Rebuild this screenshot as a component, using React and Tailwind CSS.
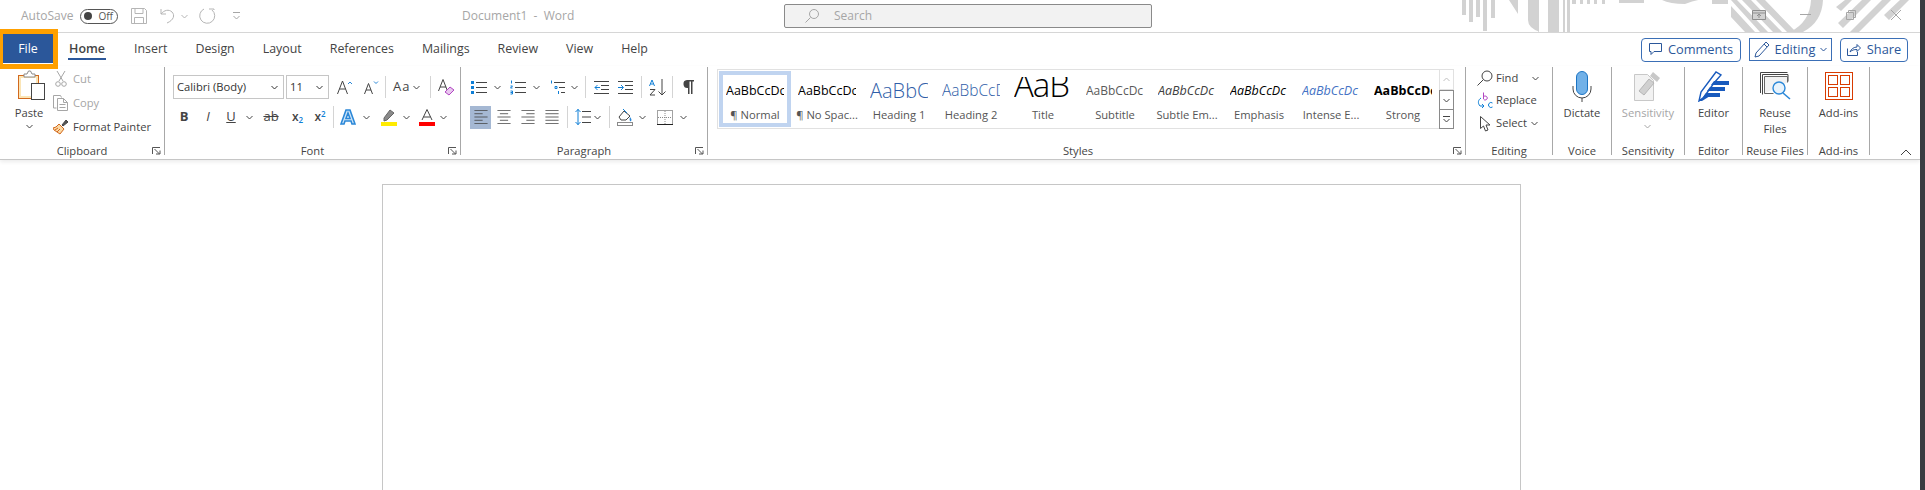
import { Fragment } from "react";

const tabs = ["Insert", "Design", "Layout", "References", "Mailings", "Review", "View", "Help"];

const styleTiles = [
  { sample: "AaBbCcDc", label: "¶ Normal", cls: "text-[12.5px] text-black", selected: true },
  { sample: "AaBbCcDc", label: "¶ No Spac...", cls: "text-[12.5px] text-black" },
  { sample: "AaBbCc", label: "Heading 1", cls: "text-[20px] text-[#2f5ea8] font-light" },
  { sample: "AaBbCcD", label: "Heading 2", cls: "text-[15.5px] text-[#2f5ea8] font-light" },
  { sample: "AaB", label: "Title", cls: "text-[33px] text-black font-light tracking-[-1px] pb-[12px]" },
  { sample: "AaBbCcDc", label: "Subtitle", cls: "text-[12px] text-[#5a5a5a]" },
  { sample: "AaBbCcDc", label: "Subtle Em...", cls: "text-[12.5px] text-[#404040] italic" },
  { sample: "AaBbCcDc", label: "Emphasis", cls: "text-[12.5px] text-black italic" },
  { sample: "AaBbCcDc", label: "Intense E...", cls: "text-[12.5px] text-[#4472c4] italic" },
  { sample: "AaBbCcDc", label: "Strong", cls: "text-[12.5px] text-black font-bold" },
];

function Chev({ color = "#444" }) {
  return (
    <svg width="7" height="5" viewBox="0 0 7 5" fill="none">
      <path d="M.5 1l3 3 3-3" stroke={color} strokeWidth="1" />
    </svg>
  );
}

function Launcher() {
  return (
    <svg width="9" height="8" viewBox="0 0 9 8" fill="none" stroke="#555" className="absolute right-[3px] bottom-0">
      <path d="M.5 7V.5H8M2.5 2l5 5M4 7h4V3.5" />
    </svg>
  );
}

function Sep({ className = "" }) {
  return <div className={"w-px h-[22px] bg-[#d4d4d4] " + className} />;
}

function Cell({ w, children }) {
  return <div className={"flex items-center justify-center h-[23px] shrink-0 " + w}>{children}</div>;
}

function Group({ w, label, launcher, children }) {
  return (
    <div className={"relative flex flex-col h-[88px] border-r border-[#a8a8a8] shrink-0 " + w}>
      <div className="flex-1 min-h-0">{children}</div>
      <div className="text-center text-[11.2px] leading-[14px] h-[14px] -mb-[3px] text-[#444] whitespace-nowrap">{label}</div>
      {launcher && <Launcher />}
    </div>
  );
}

function Big({ icon, children, muted }) {
  return (
    <div className={"flex flex-col items-center pt-[3px] text-[11.2px] leading-[16px] " + (muted ? "text-[#a6a6a6]" : "text-[#444]")}>
      <div className="h-[32px] flex items-center justify-center">{icon}</div>
      <div className="mt-[3px] text-center">{children}</div>
    </div>
  );
}

const PasteIcon = () => (
  <svg width="28" height="31" viewBox="0 0 28 31" fill="none">
    <rect x=".5" y="5.5" width="20" height="23" fill="#fbe5b6" stroke="#d2691e" />
    <rect x="3" y="8" width="15" height="18" fill="#fff" />
    <path d="M6 7V4h3l1.5-3 2 0L14 4h3v3z" fill="#fff" stroke="#8a8a8a" />
    <rect x="13.5" y="13.5" width="13" height="16" fill="#fff" stroke="#444" />
  </svg>
);

const CutIcon = () => (
  <svg width="12" height="16" viewBox="0 0 12 16" fill="none" stroke="#a6a6a6">
    <path d="M2 0l6 10M10 0L4 10" />
    <circle cx="3" cy="13" r="2.3" />
    <circle cx="9" cy="13" r="2.3" />
  </svg>
);

const CopyIcon = () => (
  <svg width="16" height="16" viewBox="0 0 16 16" fill="none" stroke="#a6a6a6">
    <path d="M.5 13V.5h7l1 2M.5 13h3" />
    <path d="M4.5 3.5h6l4 4v8h-10zM10.5 3.5v4h4M6.5 9.500h6M6.5 12.5h6" />
  </svg>
);

const BrushIcon = () => (
  <svg width="16" height="16" viewBox="0 0 16 16" fill="none">
    <path d="M6 5l5 5-4 5-6-4-1-2 3-1z" fill="#fbd9a5" stroke="#d2691e" />
    <path d="M2 11l3-2M4 13l3-3" stroke="#d2691e" />
    <path d="M9 6l4-5 2 2-5 4z" fill="#555" stroke="#444" />
  </svg>
);

const Grow = ({ up }) => (
  <svg width="16" height="15" viewBox="0 0 16 15" fill="none" strokeWidth="1">
    <path d={up ? "M.5 14L5.5 1l5 13M2.5 9h6" : "M1.5 14L5.5 3.5l4 10.5M3 10h5"} stroke="#444" />
    <path d={up ? "M11 4l2-2 2 2" : "M11 1.5l2 2 2-2"} stroke="#2b88d8" />
  </svg>
);

const ClearIcon = () => (
  <svg width="17" height="17" viewBox="0 0 17 17" fill="none">
    <path d="M.5 12L5 .5 9.5 12M2 8h6" stroke="#444" />
    <path d="M7 13l5-5 4 3-5 5z" fill="#e8c8ee" stroke="#b146c2" />
  </svg>
);

const TextA = () => (
  <svg width="16" height="16" viewBox="0 0 16 16" fill="#cfe4f7" stroke="#2b88d8" strokeWidth="1.6">
    <path fillRule="evenodd" d="M1 15L6 1h4l5 14h-3l-1-3H5l-1 3zM6 9.5h4L8 4z" />
  </svg>
);

const HighlightIcon = () => (
  <svg width="16" height="17" viewBox="0 0 16 17" fill="none">
    <path d="M3 9l6-8 4 3-7 7-3 1z" fill="#8a8a8a" stroke="#666" />
    <rect y="13" width="16" height="4" fill="#ffeb00" />
  </svg>
);

const FontColorIcon = () => (
  <svg width="16" height="17" viewBox="0 0 16 17" fill="none">
    <path d="M3 11L8 .5 13 11M4.5 8h7" stroke="#444" />
    <rect y="13" width="16" height="4" fill="#f00" />
  </svg>
);

const Bullets = () => (
  <svg width="16" height="15" viewBox="0 0 16 15" fill="none">
    <rect width="3" height="3" y="1" fill="#0f7fd6" />
    <rect width="3" height="3" y="6" fill="#0f7fd6" />
    <rect width="3" height="3" y="11" fill="#0f7fd6" />
    <path d="M5 2.5h11M5 7.5h11M5 12.5h11" stroke="#444" />
  </svg>
);

const Numbered = () => (
  <svg width="16" height="15" viewBox="0 0 16 15" fill="none">
    <path d="M1.5 .5v3M.5 6h2l-2 2h2M.5 11h2v3h-2M.5 12.5h2" stroke="#0f7fd6" />
    <path d="M5 2.5h11M5 7.5h11M5 12.5h11" stroke="#444" />
  </svg>
);

const Multi = () => (
  <svg width="16" height="15" viewBox="0 0 16 15" fill="none">
    <path d="M1.5 .5v3M5 6.5h2v2H5zM8.5 11v3" stroke="#0f7fd6" />
    <path d="M4 2.5h11M9 7.5h6M11 12.5h4" stroke="#444" />
  </svg>
);

const Indent = ({ inc }) => (
  <svg width="15" height="13" viewBox="0 0 15 13" fill="none">
    <path d="M0 .5h15M7 4.5h8M7 8.5h8M0 12.5h15" stroke="#444" />
    <path d={inc ? "M0 6.5h5M3 4l2.5 2.5L3 9" : "M1 6.5h5M3.5 4L1 6.5 3.5 9"} stroke="#0f7fd6" />
  </svg>
);

const SortIcon = () => (
  <svg width="18" height="17" viewBox="0 0 18 17" fill="none">
    <path d="M.5 7L3 1l2.5 6M1.5 5h3" stroke="#0f7fd6" />
    <path d="M1 10.5h5l-5 5.5h5" stroke="#444" />
    <path d="M13 0v16M9.5 12.5L13 16l3.5-3.5" stroke="#444" />
  </svg>
);

const Pilcrow = () => (
  <svg width="11" height="14" viewBox="0 0 11 14">
    <path d="M4 0h7v1.5H9.5V14H8V1.5H6.5V14H5V8a4 4 0 0 1-1-8z" fill="#444" />
  </svg>
);

const Align = ({ kind }) => {
  const short = { left: "M0 4.5h10M0 12.5h10", center: "M3 4.5h10M3 12.5h10", right: "M6 4.5h10M6 12.5h10", justify: "M0 4.5h16M0 12.5h16" }[kind];
  return (
    <svg width="16" height="14" viewBox="0 0 16 17" fill="none" stroke="#444">
      <path d={"M0 .5h16M0 8.5h16M0 16.5h16 " + short} />
    </svg>
  );
};

const LineSpacing = () => (
  <svg width="16" height="16" viewBox="0 0 16 16" fill="none">
    <path d="M3 0v16M.5 3L3 .5 5.5 3M.5 13L3 15.5 5.5 13" stroke="#0f7fd6" />
    <path d="M7 2.5h9M7 8h9M7 13.5h9" stroke="#444" />
  </svg>
);

const Shading = () => (
  <svg width="16" height="17" viewBox="0 0 16 17" fill="none">
    <path d="M2 8l5-6 6 5-4 4H4z" stroke="#444" fill="#fff" />
    <path d="M6 0l4 4" stroke="#0f7fd6" />
    <path d="M13 8c1.5 2 2 3 1 4s-2-1-1-4z" fill="#2b88d8" />
    <rect x=".5" y="13.5" width="15" height="3" fill="#fff" stroke="#8a8a8a" />
  </svg>
);

const Borders = () => (
  <svg width="16" height="15" viewBox="0 0 16 15" fill="none">
    <path d="M.5 .5h15v14H.5z" stroke="#444" strokeDasharray="1 1" />
    <path d="M8 1v13M1 7.5h14" stroke="#8a8a8a" strokeDasharray="1 1" />
    <path d="M0 14.5h16" stroke="#222" />
  </svg>
);

const FindIcon = () => (
  <svg width="16" height="16" viewBox="0 0 16 16" fill="none" stroke="#444">
    <circle cx="10" cy="6" r="5" />
    <path d="M6.5 9.5L.5 15.5" />
  </svg>
);

const ReplaceIcon = () => (
  <svg width="16" height="17" viewBox="0 0 16 17" fill="none" stroke="#0f7fd6">
    <path d="M4 6C1 8 .5 11 3 14h4M5 12l2 2-2 2" />
    <path d="M6.5 .5v6.5a2 2 0 1 0 0-2" stroke="#b146c2" />
    <path d="M15.5 11a2.5 2.5 0 1 0 0 4" />
  </svg>
);

const SelectIcon = () => (
  <svg width="13" height="16" viewBox="0 0 13 16" fill="#fff" stroke="#444">
    <path d="M1.5 .5v12l3-2.5 2 5 2.5-1-2-5h4z" />
  </svg>
);

const MicIcon = () => (
  <svg width="20" height="31" viewBox="0 0 20 31" fill="none">
    <rect x="4.5" y=".5" width="11" height="23" rx="5.5" fill="#71b1e8" stroke="#1d75c4" />
    <path d="M1 15v3a9 9 0 0 0 18 0v-3M10 27v4" stroke="#444" />
  </svg>
);

const SensitivityIcon = () => (
  <svg width="28" height="30" viewBox="0 0 28 30" fill="none">
    <path d="M.5 3.5h13l6 6v20H.5z" fill="#f2f2f2" stroke="#c8c8c8" />
    <path d="M5 20L15 8l5 4-10 12z" fill="#d0d0d0" stroke="#b5b5b5" />
    <path d="M19 1l7 6-3 4-7-6z" fill="#c8c8c8" />
  </svg>
);

const EditorIcon = () => (
  <svg width="32" height="31" viewBox="0 0 32 31" fill="none">
    <path d="M1 30l2-9L18 1l5 3-7 8-10 14z" fill="#fff" stroke="#185abd" strokeWidth="1.4" />
    <path d="M16 10h15v4H13zM12 16h15v4H9zM8 22h14v4H5z" fill="#185abd" />
    <path d="M1 30l5-4 6-1-8 5z" fill="#185abd" />
  </svg>
);

const ReuseIcon = () => (
  <svg width="31" height="28" viewBox="0 0 31 28" fill="none">
    <path d="M.5 21V.5h27" stroke="#444" />
    <path d="M2.5 22.5V2.5h25.5v7" stroke="#444" />
    <path d="M4.5 21.5V4.5h23v6M4.5 21.5h9" stroke="#666" fill="#f2f2f2" />
    <circle cx="19" cy="16" r="6" fill="#e8f3fc" stroke="#2b88d8" strokeWidth="1.4" />
    <path d="M23 21l7 6" stroke="#2b88d8" strokeWidth="1.6" />
  </svg>
);

const AddinsIcon = () => (
  <svg width="28" height="28" viewBox="0 0 28 28" fill="none" stroke="#d83b01">
    <rect x=".5" y=".5" width="27" height="27" />
    <rect x="3.5" y="3.5" width="9" height="9" />
    <rect x="15.5" y="3.5" width="9" height="9" />
    <rect x="3.5" y="15.5" width="9" height="9" />
    <rect x="15.5" y="15.5" width="9" height="9" />
  </svg>
);

function TitleBar() {
  return (
    <div className="relative flex items-center h-[33px] border-b border-[#d6d6d6] overflow-hidden shrink-0">
      {/* grey wallpaper behind the title bar */}
      <svg className="absolute left-[1450px] top-0" width="470" height="32" viewBox="0 0 470 32" fill="#d2d2d2">
        <path d="M12 0h4v15h-4zM19 0h4v22h-4zM26 0h4v17h-4zM33 0h4v31h-4zM41 0h4v18h-4zM59 0l9 14V0zM78 0h11v32H90Q78 28 78 20zM98 0h11v32H98zM113 0h2v32h-2zM117 0h3v32h-3zM122 0h4v4h-4zM130 0h3v4h-3zM137 0h3v4h-3zM144 0h3v4h-3zM152 0h3v4h-3zM169 0h25v3h-25zM212 0h46q-8 -2 -23 4-15 0-23-4zM262 0h16v4h-16z" />
        <path d="M281 6l24 26h-10l-14-15zM281 0h6l31 32h-8zM292 0h9l31 32h-9zM306 0h9l31 32h-9z" />
        <path d="M361 0h12q-1 22-20 32h-13q20-10 21-32z" />
        <path d="M395 0h7l-11 11-5-4zM412 0h9l-28 28-5-5zM432 0h9l-32 32h-9zM450 0h9l-20 20-5-5z" />
      </svg>
      <div className="absolute left-[1582px] top-[4px] w-[149px] h-[28px] bg-white" />

      <span className="relative ml-[21px] text-[12px] text-[#a6a6a6]">AutoSave</span>
      <div className="relative ml-[7px] flex items-center w-[38px] h-[15px] rounded-full border border-[#555] bg-white">
        <div className="ml-[3px] w-[8px] h-[8px] rounded-full bg-[#444]" />
        <span className="ml-[6px] text-[10px] leading-none text-[#555]">Off</span>
      </div>
      <svg className="relative ml-[13px]" width="16" height="16" viewBox="0 0 16 16" fill="none" stroke="#b5b5b5">
        <path d="M.5 .5h13l2 2v13H.5zM4 .5v5h8v-5M3.5 15.5v-6h9v6" />
      </svg>
      <svg className="relative ml-[13px]" width="15" height="16" viewBox="0 0 15 16" fill="none" stroke="#b5b5b5">
        <path d="M1 1v5h5M1 6c3-4 8-5 11-2s2 8-5 11" />
      </svg>
      <div className="relative ml-[6px]"><Chev color="#b5b5b5" /></div>
      <svg className="relative ml-[11px]" width="17" height="16" viewBox="0 0 17 16" fill="none" stroke="#b5b5b5">
        <path d="M10 1h5v1M13 2a7.5 7.5 0 1 1-8-1" />
      </svg>
      <svg className="relative ml-[17px]" width="7" height="8" viewBox="0 0 7 8" fill="none" stroke="#a6a6a6">
        <path d="M0 .5h7M.5 4l3 3 3-3" />
      </svg>

      <span className="absolute left-[462px] text-[12px] text-[#a6a6a6] whitespace-pre">Document1  -  Word</span>

      <div className="absolute left-[784px] top-[4px] flex items-center w-[368px] h-[24px] bg-[#f2f2f2] border border-[#8a8a8a] rounded-[2px]">
        <svg className="ml-[20px]" width="14" height="14" viewBox="0 0 14 14" fill="none" stroke="#a6a6a6">
          <circle cx="9" cy="5" r="4.5" />
          <path d="M5.5 8.5L.5 13.5" />
        </svg>
        <span className="ml-[15px] text-[12px] text-[#a6a6a6]">Search</span>
      </div>

      <div className="absolute right-0 top-0 h-full">
        <svg className="absolute right-[154px] top-[10px]" width="14" height="10" viewBox="0 0 14 10" fill="#d2d2d2" stroke="#8f8f8f">
          <path d="M.5 .5h13v9H.5zM.5 3h13M7 8V4M5 6l2-2 2 2" />
        </svg>
        <div className="absolute right-[109px] top-[14px] w-[11px] h-px bg-[#a6a6a6]" />
        <svg className="absolute right-[64px] top-[10px]" width="10" height="10" viewBox="0 0 10 10" fill="none" stroke="#a6a6a6">
          <path d="M.5 2.5h7v7h-7zM2.5 2V.5h7v7H8" />
        </svg>
        <svg className="absolute right-[19px] top-[10px]" width="10" height="10" viewBox="0 0 10 10" stroke="#a6a6a6">
          <path d="M0 0l10 10M10 0L0 10" />
        </svg>
      </div>
    </div>
  );
}

function TabRow() {
  return (
    <div className="flex items-center h-[33px] shrink-0 text-[12.4px] text-[#444]">
      <div className="relative w-[58px] h-full">
        {/* orange callout around the File tab */}
        <div className="absolute left-0 top-[-4px] w-[58px] h-[40px] bg-[#2b579a] border-[#ffa000] border-l-[3px] border-r-[5px] border-t-[5px] border-b-[5px] text-white flex items-center justify-center">
          File
          <div className="absolute left-0 right-0 bottom-0 h-px bg-white" />
        </div>
      </div>
      <div className="relative ml-[10px] w-[38px] h-full flex items-center justify-center font-semibold">
        Home
        <div className="absolute left-0 right-0 bottom-[6px] h-[2px] bg-[#2b579a]" />
      </div>
      {tabs.map((t) => (
        <div key={t} className="ml-[28px]">{t}</div>
      ))}
      <div className="ml-auto flex items-center mr-[12px] text-[12.8px] font-medium text-[#2b579a]">
        <div className="flex items-center justify-center gap-[6px] w-[100px] h-[24px] border border-[#3b6fb6] rounded-[4px]">
          <svg width="13" height="13" viewBox="0 0 13 13" fill="none" stroke="#2b579a">
            <path d="M.5 .5h12v8H5l-3 3V8.500H.5z" />
          </svg>
          Comments
        </div>
        <div className="ml-[8px] flex items-center justify-center gap-[5px] w-[83px] h-[23px] border border-[#3b6fb6]">
          <svg width="16" height="17" viewBox="0 0 16 17" fill="none" stroke="#2b579a">
            <path d="M1 16l1-4L12 1l3 3L5 15zM10 3l3 3" />
          </svg>
          Editing
          <Chev color="#2b579a" />
        </div>
        <div className="ml-[8px] flex items-center justify-center gap-[6px] w-[68px] h-[24px] border border-[#3b6fb6] rounded-[4px]">
          <svg width="14" height="13" viewBox="0 0 14 13" fill="none" stroke="#2b579a">
            <path d="M.5 5.500v7h10V9M3 9c1-3 4-5 7-5V1.500l3.500 3.500L10 8.500V6.500C7 6.500 5 7 3 9z" />
          </svg>
          Share
        </div>
      </div>
    </div>
  );
}

function ClipboardGroup() {
  return (
    <Group w="w-[165px]" label="Clipboard" launcher>
      <div className="flex">
        <div className="ml-[15px] w-[28px] flex flex-col items-center pt-[3px] text-[11.2px] leading-[16px] text-[#444]">
          <div className="translate-x-[3px]"><PasteIcon /></div>
          <div className="mt-[4px]">Paste</div>
          <div className="mt-[3px]"><Chev /></div>
        </div>
        <div className="ml-[10px] flex flex-col text-[11.2px]">
          <div className="flex items-center gap-[5px] h-[24px] text-[#a6a6a6]">
            <div className="w-[15px] flex justify-center"><CutIcon /></div>Cut
          </div>
          <div className="flex items-center gap-[3px] h-[24px] text-[#a6a6a6]">
            <div className="w-[17px]"><CopyIcon /></div>Copy
          </div>
          <div className="flex items-center gap-[3px] h-[24px] text-[#444]">
            <div className="w-[17px]"><BrushIcon /></div>Format Painter
          </div>
        </div>
      </div>
    </Group>
  );
}

function FontGroup() {
  return (
    <Group w="w-[296px]" label="Font" launcher>
      <div className="flex items-center pt-[8px] pl-[8px] h-[32px]">
        <div className="flex items-center justify-between w-[111px] h-[24px] border border-[#c6c6c6] px-[3px] text-[11.2px] text-[#333]">
          Calibri (Body)
          <div className="mr-[2px]"><Chev color="#333" /></div>
        </div>
        <div className="ml-[2px] flex items-center justify-between w-[43px] h-[24px] border border-[#c6c6c6] px-[3px] text-[11.2px] text-[#333]">
          11
          <div className="mr-[2px]"><Chev color="#333" /></div>
        </div>
        <Cell w="w-[30px] ml-[1px]"><Grow up /></Cell>
        <Cell w="w-[22px]"><Grow /></Cell>
        <Sep className="ml-[3px]" />
        <div className="flex items-center ml-[7px] w-[28px] gap-[3px] text-[13px] tracking-[1px] text-[#444]">Aa<Chev /></div>
        <Sep className="ml-[9px]" />
        <div className="ml-[7px]"><ClearIcon /></div>
      </div>
      <div className="flex items-center pl-[7px] mt-[6px] h-[24px] text-[#444]">
        <Cell w="w-[24px] font-bold text-[13px]">B</Cell>
        <Cell w="w-[24px] italic text-[13px]">I</Cell>
        <Cell w="w-[22px] underline text-[13px]">U</Cell>
        <Cell w="w-[14px]"><Chev /></Cell>
        <Cell w="w-[30px] line-through text-[13px]">ab</Cell>
        <Cell w="w-[23px] text-[12px] font-semibold"><span>x<sub className="text-[8px] text-[#0f7fd6]">2</sub></span></Cell>
        <Cell w="w-[22px] text-[12px] font-semibold"><span>x<sup className="text-[8px] text-[#0f7fd6]">2</sup></span></Cell>
        <Sep className="ml-[2px]" />
        <Cell w="w-[28px]"><TextA /></Cell>
        <Cell w="w-[9px]"><Chev /></Cell>
        <Cell w="w-[28px] ml-[4px]"><HighlightIcon /></Cell>
        <Cell w="w-[7px]"><Chev /></Cell>
        <Cell w="w-[26px] ml-[4px]"><FontColorIcon /></Cell>
        <Cell w="w-[7px]"><Chev /></Cell>
      </div>
    </Group>
  );
}

function ParagraphGroup() {
  return (
    <Group w="w-[247px]" label="Paragraph" launcher>
      <div className="flex items-center pt-[8px] pl-[10px] h-[32px]">
        <Bullets />
        <div className="ml-[7px]"><Chev /></div>
        <div className="ml-[9px]"><Numbered /></div>
        <div className="ml-[7px]"><Chev /></div>
        <div className="ml-[10px]"><Multi /></div>
        <div className="ml-[5px]"><Chev /></div>
        <Sep className="ml-[7px]" />
        <div className="ml-[8px]"><Indent /></div>
        <div className="ml-[9px]"><Indent inc /></div>
        <Sep className="ml-[8px]" />
        <div className="ml-[7px]"><SortIcon /></div>
        <Sep className="ml-[5px]" />
        <div className="ml-[10px]"><Pilcrow /></div>
      </div>
      <div className="flex items-center pl-[9px] mt-[6px] h-[24px]">
        <div className="flex items-center justify-center w-[21px] h-[23px] bg-[#a5b8d3]"><Align kind="left" /></div>
        <div className="ml-[5px]"><Align kind="center" /></div>
        <div className="ml-[8px]"><Align kind="right" /></div>
        <div className="ml-[8px]"><Align kind="justify" /></div>
        <Sep className="ml-[7px]" />
        <div className="ml-[7px]"><LineSpacing /></div>
        <div className="ml-[3px]"><Chev /></div>
        <Sep className="ml-[8px]" />
        <div className="ml-[7px]"><Shading /></div>
        <div className="ml-[6px]"><Chev /></div>
        <div className="ml-[11px]"><Borders /></div>
        <div className="ml-[7px]"><Chev /></div>
      </div>
    </Group>
  );
}

function StylesGroup() {
  return (
    <Group w="w-[758px]" label={<span className="pr-[17px]">Styles</span>} launcher>
      <div className="flex pt-[2px] pl-[9px]">
        <div className="flex items-center w-[723px] h-[60px] border border-[#e1e1e1] pl-[1px]">
          {styleTiles.map((s) => (
            <div key={s.label} className={"flex flex-col items-center justify-between w-[72px] h-[56px] shrink-0 text-[#555] border-[4px] " + (s.selected ? "border-[#c0d4f0]" : "border-transparent")}>
              <div className={"mt-[2px] w-[58px] h-[28px] overflow-hidden whitespace-nowrap flex items-center justify-start " + s.cls}>
                <span>{s.sample}</span>
              </div>
              <div className="text-[11.2px] leading-[14px] mb-[1px] whitespace-nowrap">{s.label}</div>
            </div>
          ))}
        </div>
        <div className="flex flex-col w-[15px] h-[60px] ml-[-1px]">
          <div className="flex items-center justify-center h-[21px] border border-[#e1e1e1]">
            <div className="rotate-180"><Chev color="#c0c0c0" /></div>
          </div>
          <div className="flex items-center justify-center h-[20px] border border-[#8a8a8a]"><Chev /></div>
          <div className="flex items-center justify-center h-[19px] border border-t-0 border-[#8a8a8a]">
            <svg width="7" height="7" viewBox="0 0 7 7" fill="none" stroke="#444">
              <path d="M0 .5h7M.5 3l3 3 3-3" />
            </svg>
          </div>
        </div>
      </div>
    </Group>
  );
}

function EditingGroup() {
  return (
    <Group w="w-[87px]" label="Editing">
      <div className="flex flex-col pl-[11px] text-[11.2px] text-[#444]">
        <div className="flex items-center h-[22px]">
          <div className="w-[19px]"><FindIcon /></div>Find<div className="ml-[14px]"><Chev /></div>
        </div>
        <div className="flex items-center h-[23px]">
          <div className="w-[19px]"><ReplaceIcon /></div>Replace
        </div>
        <div className="flex items-center h-[23px]">
          <div className="w-[19px] pl-[2px]"><SelectIcon /></div>Select<div className="ml-[4px]"><Chev /></div>
        </div>
      </div>
    </Group>
  );
}

export default function App() {
  return (
    <div className="flex h-[490px] w-[1925px] overflow-hidden bg-white font-['Open_Sans','Noto_Sans',sans-serif]">
      <div className="flex flex-col w-[1920px] shrink-0">
        <TitleBar />
        <TabRow />
        <div className="relative flex h-[94px] pt-[1px] shrink-0 border-b border-[#c6c6c6] shadow-[0_2px_4px_rgba(0,0,0,0.08)]">
          <ClipboardGroup />
          <FontGroup />
          <ParagraphGroup />
          <StylesGroup />
          <EditingGroup />
          <Group w="w-[59px]" label="Voice"><Big icon={<MicIcon />}>Dictate</Big></Group>
          <Group w="w-[73px]" label="Sensitivity">
            <Big muted icon={<SensitivityIcon />}>
              Sensitivity
              <div className="flex justify-center mt-[3px]"><Chev color="#a6a6a6" /></div>
            </Big>
          </Group>
          <Group w="w-[58px]" label="Editor"><Big icon={<EditorIcon />}>Editor</Big></Group>
          <Group w="w-[65px]" label="Reuse Files"><Big icon={<ReuseIcon />}>Reuse<br />Files</Big></Group>
          <Group w="w-[62px]" label="Add-ins"><Big icon={<AddinsIcon />}>Add-ins</Big></Group>
          <svg className="absolute right-[8px] bottom-[3px]" width="12" height="7" viewBox="0 0 12 7" fill="none" stroke="#444">
            <path d="M1 6l5-5 5 5" />
          </svg>
        </div>
        <div className="flex-1 min-h-0 pt-[24px] pl-[382px]">
          <div className="w-[1139px] h-[400px] border border-[#c6c6c6] bg-white" />
        </div>
      </div>
      <div className="w-[5px] bg-[#3a3d42]" />
    </div>
  );
}
